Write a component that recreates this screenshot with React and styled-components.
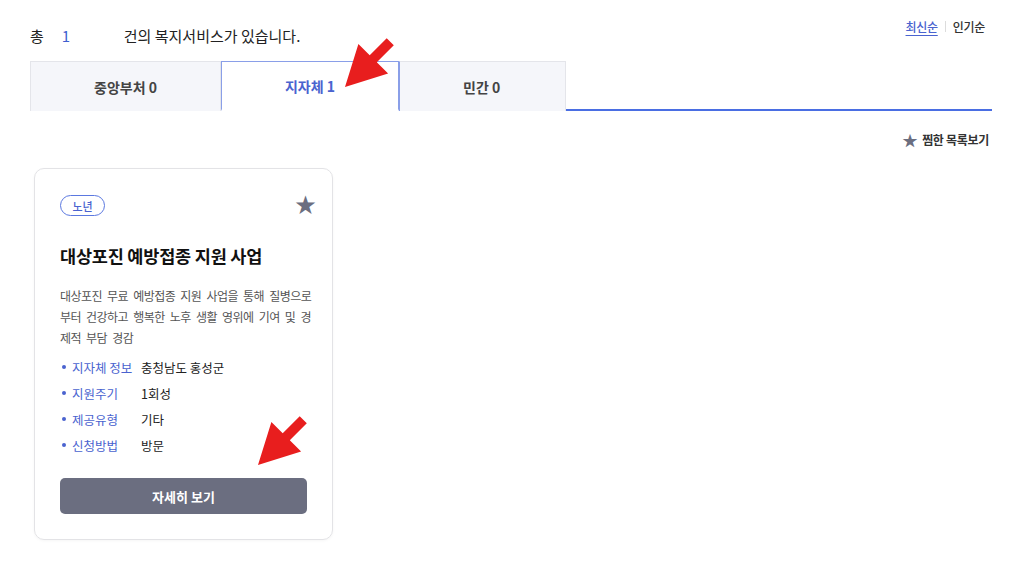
import React from 'react';
import styled, { createGlobalStyle } from 'styled-components';

const GlobalStyle = createGlobalStyle`
    html, body {
        margin: 0;
        padding: 0;
        background: #ffffff;
    }
    body {
        font-family: "Noto Sans CJK KR", "Noto Sans", sans-serif;
        color: #222;
        width: 1024px;
        height: 574px;
        overflow: hidden;
    }
`;

const tabs = [
    { name: '중앙부처', count: 0 },
    { name: '지자체', count: 1, active: true },
    { name: '민간', count: 0 },
];

const info = [
    { label: '지자체 정보', value: '충청남도 홍성군' },
    { label: '지원주기', value: '1회성' },
    { label: '제공유형', value: '기타' },
    { label: '신청방법', value: '방문' },
];

function Arrow({ left, top }) {
    return (
        <ArrowMark style={{ left, top }} width="60" height="60" viewBox="0 0 60 60">
            <polygon
                points="2,58 15.4,14.9 26.7,26.2 43.7,9.2 50.8,16.3 33.8,33.3 45.1,44.6"
                fill="#e81e1e"
            />
        </ArrowMark>
    );
}

function App() {
    return (
        <Page>
            <GlobalStyle />
            <Header>
                <Total>
                    총<Count>1</Count>건의 복지서비스가 있습니다.
                </Total>
                <Sort>
                    <SortLink active>최신순</SortLink>
                    <SortDivider />
                    <SortLink>인기순</SortLink>
                </Sort>
            </Header>

            <TabBar>
                {tabs.map((t) => (
                    <Tab key={t.name} active={t.active}>
                        {t.name} {t.count}
                    </Tab>
                ))}
            </TabBar>

            <FavRow>
                <FavLink>
                    <StarGlyph size={15}>★</StarGlyph>
                    찜한 목록보기
                </FavLink>
            </FavRow>

            <CardGrid>
                <Card>
                    <CardTop>
                        <Badge>노년</Badge>
                        <StarGlyph size={21} lift>★</StarGlyph>
                    </CardTop>
                    <Title>대상포진 예방접종 지원 사업</Title>
                    <Desc>
                        대상포진 무료 예방접종 지원 사업을 통해 질병으로부터 건강하고 행복한 노후 생활 영위에 기여 및 경제적 부담 경감
                    </Desc>
                    <InfoList>
                        {info.map((i) => (
                            <InfoRow key={i.label}>
                                <InfoLabel>{i.label}</InfoLabel>
                                <InfoValue>{i.value}</InfoValue>
                            </InfoRow>
                        ))}
                    </InfoList>
                    <DetailButton>자세히 보기</DetailButton>
                </Card>
            </CardGrid>

            <Arrow left={343} top={29} />
            <Arrow left={256} top={407} />
        </Page>
    );
}

const Page = styled.div`
    position: relative;
    width: 962px;
    padding: 18px 32px 0 30px;
`;

const Header = styled.div`
    display: flex;
    justify-content: space-between;
    align-items: flex-start;
    height: 43px;
`;

const Total = styled.div`
    margin-top: 7px;
    font-size: 15px;
    color: #222;
`;

const Count = styled.span`
    display: inline-block;
    width: 62px;
    margin-left: 18px;
    color: #3f5ecf;
`;

const Sort = styled.div`
    display: flex;
    align-items: center;
    margin-right: 7px;
    font-size: 12px;
    font-weight: 500;
    letter-spacing: -0.3px;
`;

const SortLink = styled.span`
    color: ${(p) => (p.active ? '#4a63cf' : '#333')};
    text-decoration: ${(p) => (p.active ? 'underline' : 'none')};
    text-underline-offset: 3px;
`;

const SortDivider = styled.span`
    width: 1px;
    height: 11px;
    margin: 0 7px;
    background: #dcdcdc;
`;

const TabBar = styled.div`
    display: flex;
    height: 48px;
    border-bottom: 2px solid #4a6ee3;
`;

const Tab = styled.div`
    display: flex;
    align-items: center;
    justify-content: center;
    padding: 0 63px;
    margin-bottom: -2px;
    font-size: 14px;
    font-weight: 700;
    color: ${(p) => (p.active ? '#4a63cf' : '#444')};
    background: ${(p) => (p.active ? '#fff' : '#f5f6fa')};
    border: 1px solid ${(p) => (p.active ? '#8a9fe8' : '#e4e5ea')};
    border-bottom: ${(p) => (p.active ? '2px solid #fff' : 'none')};
    & + & {
        border-left: ${(p) => (p.active ? '1px solid #8a9fe8' : 'none')};
    }
    &:last-child {
        padding-right: 65px;
    }
`;

const FavRow = styled.div`
    display: flex;
    justify-content: flex-end;
    padding: 20px 3px 0 0;
`;

const FavLink = styled.div`
    display: flex;
    align-items: center;
    gap: 5px;
    font-size: 12px;
    font-weight: 700;
    color: #333;
    letter-spacing: -0.3px;
`;

const StarGlyph = styled.span`
    font-size: ${(p) => p.size}px;
    line-height: 1;
    color: #6b6e80;
    margin-top: ${(p) => (p.lift ? '-2px' : '0')};
`;

const CardGrid = styled.div`
    display: grid;
    grid-template-columns: repeat(3, 299px);
    padding: 20px 0 0 4px;
`;

const Card = styled.div`
    display: flex;
    flex-direction: column;
    height: 372px;
    box-sizing: border-box;
    padding: 26px 25px 25px 25px;
    border: 1px solid #e3e3e6;
    border-radius: 10px;
    box-shadow: 0 1px 3px rgba(0, 0, 0, 0.04);
`;

const CardTop = styled.div`
    display: flex;
    justify-content: space-between;
    align-items: flex-start;
    margin-right: -9px;
`;

const Badge = styled.span`
    display: inline-flex;
    align-items: center;
    justify-content: center;
    width: 45px;
    height: 21px;
    box-sizing: border-box;
    border: 1px solid #5b78e0;
    border-radius: 11px;
    font-size: 11px;
    font-weight: 500;
    color: #4a63cf;
`;

const Title = styled.h2`
    margin: 27px 0 0;
    font-size: 17.5px;
    font-weight: 700;
    letter-spacing: -0.2px;
    color: #111;
`;

const Desc = styled.p`
    margin: 17px -6px 0 0;
    font-size: 12px;
    letter-spacing: -0.55px;
    word-spacing: 3px;
    line-height: 21px;
    color: #555;
    word-break: break-all;
`;

const InfoList = styled.ul`
    list-style: none;
    margin: 6px 0 0;
    padding: 0;
`;

const InfoRow = styled.li`
    display: grid;
    grid-template-columns: 81px 1fr;
    height: 26px;
    align-items: center;
    font-size: 12.5px;
`;

const InfoLabel = styled.span`
    display: flex;
    align-items: center;
    color: #4a63cf;
    &::before {
        content: '';
        width: 4px;
        height: 4px;
        margin: 0 6px 0 2px;
        border-radius: 50%;
        background: #4a63cf;
    }
`;

const InfoValue = styled.span`
    color: #222;
`;

const DetailButton = styled.button`
    margin-top: auto;
    height: 36px;
    border: 0;
    border-radius: 5px;
    background: #6b6e80;
    color: #fff;
    font-family: inherit;
    font-size: 13px;
    font-weight: 700;
`;

const ArrowMark = styled.svg`
    position: absolute;
    pointer-events: none;
`;

export default App;
